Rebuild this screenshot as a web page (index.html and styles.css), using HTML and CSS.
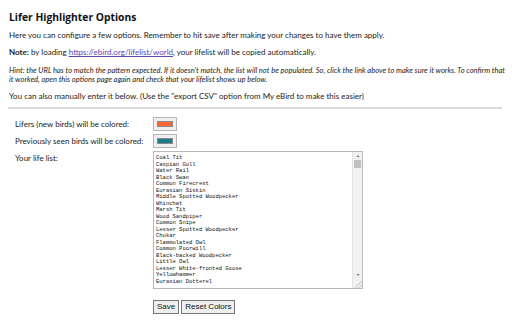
FILE: index.html
```html
<!DOCTYPE html>
<html lang="en">
<head>
    <meta charset="UTF-8">
    <title>Lifer Highlighter Options</title>
    <link rel="stylesheet" href="styles.css">
</head>
<body>
<h1>Lifer Highlighter Options</h1>
<p>Here you can configure a few options. Remember to hit save after making your changes to have them apply.</p>
<p><b>Note:</b> by loading <a href="#">https://ebird.org/lifelist/world</a>, your lifelist will be copied automatically.</p>
<p class="hint">Hint: the URL has to match the pattern expected. If it doesn't match, the list will not be populated. So, click the link above to make sure it works. To confirm that it worked, open this options page again and check that your lifelist shows up below.</p>
<p>You can also manually enter it below. (Use the "export CSV" option from My eBird to make this easier)</p>
<hr>
<div class="options">
    <label>Lifers (new birds) will be colored:</label>
    <span class="swatch"><span class="fill lifer"></span></span>
    <label>Previously seen birds will be colored:</label>
    <span class="swatch"><span class="fill seen"></span></span>
    <label>Your life list:</label>
    <div class="listbox">
        <div class="lines">Coal Tit
Caspian Gull
Water Rail
Black Swan
Common Firecrest
Eurasian Siskin
Middle Spotted Woodpecker
Whinchat
Marsh Tit
Wood Sandpiper
Common Snipe
Lesser Spotted Woodpecker
Chukar
Flammulated Owl
Common Poorwill
Black-backed Woodpecker
Little Owl
Lesser White-fronted Goose
Yellowhammer
Eurasian Dotterel</div>
        <div class="scrollbar">
            <span class="arrow up"></span>
            <span class="thumb"></span>
            <span class="arrow down"></span>
            <span class="grip"></span>
        </div>
    </div>
    <span></span>
    <div class="buttons">
        <button type="button">Save</button>
        <button type="button">Reset Colors</button>
    </div>
</div>
</body>
</html>
```

FILE: styles.css
```css
body {
    font-family: "Lato", "Noto Sans", sans-serif;
    font-size: 8px;
    color: #222;
    margin: 0;
    padding: 0 10px 0 9px;
    background-color: #fff;
    overflow: hidden;
}

h1 {
    font-family: "Open Sans", sans-serif;
    font-size: 10.3px;
    font-weight: bold;
    color: #111;
    margin: 10px 0 0 0;
    line-height: 14px;
}

p {
    margin: 7px 0 0 0;
    line-height: 10px;
}

h1 + p {
    margin-top: 6px;
}

a {
    color: #5b44b5;
}

.hint {
    font-style: italic;
    font-size: 7.55px;
    line-height: 9px;
    margin-top: 9px;
    margin-right: -3px;
}

.hint + p {
    margin-top: 7px;
}

hr {
    border: none;
    border-top: 2px solid #dcdcdc;
    margin: 6px 0 0 -1px;
}

.options {
    display: grid;
    grid-template-columns: 138px 210px;
    row-gap: 3px;
    padding: 8px 0 0 6px;
    align-items: center;
}

.options label {
    line-height: 14px;
    align-self: start;
    white-space: nowrap;
}

.swatch {
    display: flex;
    width: 24px;
    height: 14px;
    box-sizing: border-box;
    border: 1px solid #b5b5b5;
    background-color: #efefef;
    padding: 3px 3px;
}

.fill {
    flex: 1;
    border: 1px solid #8a8a8a;
}

.lifer {
    background-color: #fb6535;
}

.seen {
    background-color: #1b7c8a;
}

.listbox {
    display: flex;
    width: 210px;
    height: 138px;
    box-sizing: border-box;
    border: 1px solid #b9b9b9;
    overflow: hidden;
}

.lines {
    flex: 1;
    font-family: "Liberation Mono", monospace;
    font-size: 5.5px;
    line-height: 6.5px;
    white-space: pre;
    padding: 3px 2px;
    color: #111;
    overflow: hidden;
}

.scrollbar {
    width: 9px;
    background-color: #f1f1f1;
    border-left: 1px solid #e6e6e6;
    display: flex;
    flex-direction: column;
    align-items: center;
}

.arrow {
    width: 0;
    height: 0;
    border-left: 2px solid transparent;
    border-right: 2px solid transparent;
    margin: 3px 0;
}

.up {
    border-bottom: 2px solid #8f8f8f;
}

.down {
    border-top: 2px solid #8f8f8f;
    margin-top: auto;
}

.thumb {
    width: 7px;
    height: 8px;
    background-color: #c1c1c1;
}

.grip {
    width: 9px;
    height: 9px;
    background: linear-gradient(135deg, #f1f1f1 55%, #bbb 60%, #f1f1f1 66%, #f1f1f1 75%, #bbb 80%, #f1f1f1 86%);
}

.buttons {
    display: flex;
    gap: 2px;
    margin-top: 8px;
}

button {
    font-family: "Liberation Sans", Arial, sans-serif;
    font-size: 8px;
    color: #111;
    background-color: #efefef;
    border: 1px solid #767676;
    border-radius: 0;
    padding: 0 3px;
    height: 14px;
    line-height: 12px;
}
```
